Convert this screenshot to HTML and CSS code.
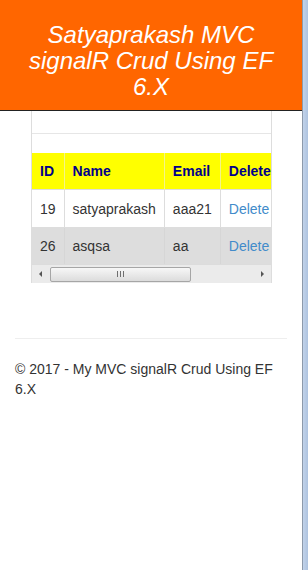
FILE: index.html
```html
<!DOCTYPE html>
<html>
<head>
<meta charset="utf-8">
<link rel="stylesheet" href="styles.css">
</head>
<body>
<div class="page">
  <div class="main">
    <header class="header">Satyaprakash MVC signalR Crud Using EF 6.X</header>
    <div class="content">
      <div class="grid-box">
        <div class="spacer-top"></div>
        <div class="spacer-mid"></div>
        <div class="table-clip">
          <table class="grid">
            <thead>
              <tr><th class="c-id">ID</th><th class="c-name">Name</th><th class="c-email">Email</th><th class="c-del">Delete</th></tr>
            </thead>
            <tbody>
              <tr><td>19</td><td>satyaprakash</td><td>aaa21</td><td><a class="del">Delete</a></td></tr>
              <tr class="alt"><td>26</td><td>asqsa</td><td>aa</td><td><a class="del">Delete</a></td></tr>
            </tbody>
          </table>
        </div>
        <div class="hscroll">
          <span class="arrow arrow-left"></span>
          <div class="track"><div class="thumb"><span class="grip"></span></div></div>
          <span class="arrow arrow-right"></span>
        </div>
      </div>
      <hr class="rule">
      <footer class="footer">© 2017 - My MVC signalR Crud Using EF 6.X</footer>
    </div>
  </div>
  <div class="edge"></div>
</div>
</body>
</html>
```
FILE: styles.css
```css
html, body {
  margin: 0;
  padding: 0;
  background: #fff;
}
body {
  font-family: "Liberation Sans", Arial, sans-serif;
  font-size: 14px;
  line-height: 20px;
  color: #333;
}
.page {
  display: flex;
  min-height: 570px;
}
.main {
  width: 302px;
  flex: 0 0 302px;
}
.edge {
  flex: 1;
  background: linear-gradient(to right, #8d9aab 0, #8d9aab 1px, #c2d3ea 1px, #aec3df 100%);
}
.header {
  background: #ff6600;
  color: #fff;
  font-style: italic;
  font-size: 24px;
  line-height: 26px;
  text-align: center;
  padding: 22px 12px 10px;
  height: 78px;
  border-bottom: 1px solid #222;
}
.content {
  padding: 0 15px;
}
.grid-box {
  margin-left: 16px;
  width: 239px;
  border-left: 1px solid #ddd;
  border-right: 1px solid #ddd;
}
.spacer-top {
  height: 22px;
  border-bottom: 1px solid #e6e6e6;
}
.spacer-mid {
  height: 19px;
}
.table-clip {
  overflow: hidden;
}
.grid {
  border-collapse: collapse;
  white-space: nowrap;
}
.grid th, .grid td {
  padding: 8px 8px;
  text-align: left;
  border-left: 1px solid #ddd;
  border-top: 1px solid #ddd;
}
.grid th:first-child, .grid td:first-child {
  border-left: none;
}
.grid th {
  background: #ffff00;
  color: #00008b;
  font-weight: bold;
  border-top: none;
  border-left-color: #f4f48a;
  height: 20px;
}
.c-id { width: 15px; }
.c-name { width: 86px; }
.c-email { width: 41px; }
.grid td { height: 21px; }
.grid tr.alt td {
  background: #dddddd;
  border-left-color: #d6d6d6;
  height: 19px;
}
.del {
  color: #428bca;
  text-decoration: none;
}
.hscroll {
  display: flex;
  align-items: center;
  height: 18px;
  background: #ebebeb;
  border-top: 1px solid #dcdcdc;
}
.arrow {
  width: 0;
  height: 0;
  border-top: 3px solid transparent;
  border-bottom: 3px solid transparent;
}
.arrow-left {
  margin-left: 7px;
  border-right: 3px solid #555;
}
.arrow-right {
  margin-left: auto;
  margin-right: 7px;
  border-left: 3px solid #555;
}
.track {
  margin-left: 8px;
  width: 141px;
}
.thumb {
  height: 13px;
  border: 1px solid #a6a6a6;
  border-radius: 2px;
  background: linear-gradient(#f7f7f7, #dcdcdc);
  display: flex;
  align-items: center;
  justify-content: center;
}
.grip {
  width: 7px;
  height: 6px;
  background: repeating-linear-gradient(to right, #6f6f6f 0, #6f6f6f 1px, transparent 1px, transparent 3px);
}
.rule {
  margin: 55px 0 20px;
  border: 0;
  border-top: 1px solid #eee;
}
.footer {
  color: #333;
}
```
